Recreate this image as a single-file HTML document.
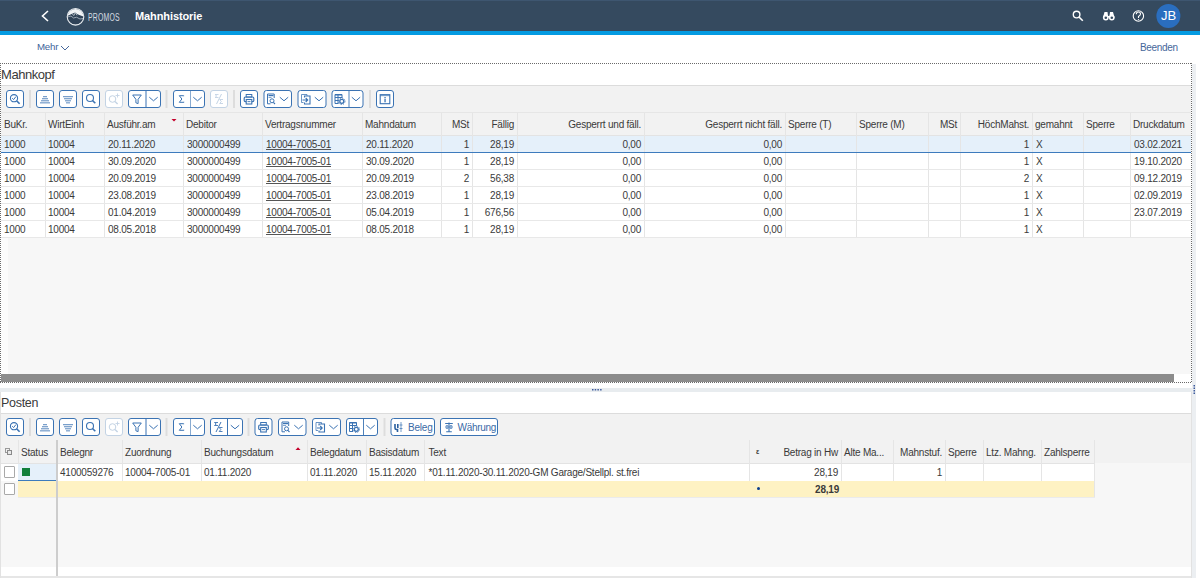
<!DOCTYPE html>
<html><head><meta charset="utf-8">
<style>
*{margin:0;padding:0;box-sizing:border-box}
html,body{width:1200px;height:578px;overflow:hidden;background:#fff;font-family:"Liberation Sans",sans-serif;color:#333}
.a{position:absolute}
.t{position:absolute;font-size:10px;letter-spacing:-0.22px;white-space:nowrap;line-height:17px;color:#3a3a3a}
.r{text-align:right}
.vl{position:absolute;width:1px;background:#e5e5e5}
.btn{position:absolute;height:18px;border:1px solid #3a72b0;border-radius:3px;background:#fff}
.btn.dis{border-color:#bfd0e2}
.sep{position:absolute;width:2px;height:18px;background:#dedede}
.dv{position:absolute;top:0;width:1px;height:16px;background:#3a72b0}
svg{position:absolute;overflow:visible}
</style></head><body>
<!-- shell -->
<div class="a" style="left:0;top:0;width:1200px;height:31px;background:#354a5f"></div>
<div class="a" style="left:0;top:0;width:1200px;height:1px;background:#3e5670"></div>
<div class="a" style="left:0;top:31px;width:1200px;height:4px;background:#049be2"></div>
<svg style="left:0;top:0" width="1200" height="30">
  <path d="M48 11 L42.5 16 L48 21" fill="none" stroke="#fff" stroke-width="1.6"/>
  <defs><clipPath id="lc"><circle cx="75.5" cy="16.8" r="7.9"/></clipPath></defs>
  <circle cx="75.5" cy="16.8" r="7.9" fill="#f2f4f6"/>
  <g clip-path="url(#lc)">
    <path d="M66 16.5 L69 15.3 L72 13.8 L75.2 12.6 L77.5 14.2 L80 15.2 L85 17 L85 26 L66 26 Z" fill="#2f4257"/>
    <path d="M67.5 17 L71 16 L73.5 18 L76.5 17.2 L80 19 L83 18.5" fill="none" stroke="#c9d2db" stroke-width="0.7"/>
    <path d="M72 13.8 L74 15.5 L75.2 12.6 L77 15.3" fill="none" stroke="#dfe5ea" stroke-width="0.7"/>
  </g>
  <circle cx="75.5" cy="16.8" r="8.3" fill="none" stroke="#e8ecef" stroke-width="1.1"/>
  <g stroke="#fff" fill="none">
    <circle cx="1076.6" cy="14.6" r="3.3" stroke-width="1.4"/>
    <path d="M1079 17 L1082.8 20.8" stroke-width="1.6"/>
    <circle cx="1138.4" cy="16" r="5.2" stroke-width="1.1"/>
  </g>
  <path d="M1136.3 14.3 Q1136.3 12 1138.4 12 Q1140.5 12 1140.5 14 Q1140.5 15.3 1138.5 16.5 L1138.5 18" fill="none" stroke="#fff" stroke-width="1.1"/>
  <circle cx="1138.5" cy="19.6" r="0.7" fill="#fff"/>
  <g fill="#fff">
    <path d="M1104.5 12 L1107.5 12 L1108 16 L1109.5 16 L1110 12 L1113 12 L1114.5 17.5 L1103 17.5 Z"/>
    <circle cx="1105.8" cy="17.6" r="2.9"/>
    <circle cx="1111.8" cy="17.6" r="2.9"/>
  </g>
  <circle cx="1105.8" cy="17.8" r="1.3" fill="#354a5f"/>
  <circle cx="1111.8" cy="17.8" r="1.3" fill="#354a5f"/>
  <circle cx="1168.4" cy="16" r="12" fill="#2a6ebf"/>
</svg>
<div class="t" style="left:88px;top:9px;font-size:10px;line-height:17px;color:#d5dbe2;letter-spacing:0.3px;transform:scaleX(0.69);transform-origin:0 0">PROMOS</div>
<div class="t" style="left:135px;top:7.5px;font-size:11px;line-height:17px;color:#fff;font-weight:bold;letter-spacing:-0.1px">Mahnhistorie</div>
<div class="t" style="left:1157px;top:7px;font-size:13px;line-height:18px;color:#fff;letter-spacing:0;width:23px;text-align:center">JB</div>

<!-- toolbar -->
<div class="t" style="left:37px;top:38px;font-size:9.7px;color:#41649a;letter-spacing:-0.2px">Mehr</div>
<div class="t" style="left:1140px;top:39px;font-size:10px;color:#46679a;letter-spacing:-0.35px">Beenden</div>

<!-- group 1 -->

<div class="t" style="left:1px;top:64px;font-size:13px;line-height:21px;letter-spacing:-0.45px">Mahnkopf</div>
<div class="a" style="left:1px;top:85px;width:1190px;height:27px;background:#f2f2f2;border-top:1px solid #dcdcdc"></div>
<div class="a" style="left:1px;top:112px;width:1190px;height:23px;background:#f2f2f2;border-top:1px solid #e6e6e6"></div>
<div class="a" style="left:1px;top:135px;width:1190px;height:103px;background:#fff"></div>
<div class="a" style="left:1px;top:135px;width:1190px;height:1px;background:#e3e3e3"></div><div class="a" style="left:1px;top:136px;width:1190px;height:17px;background:#e5f0fa;border-bottom:1px solid #3d7bbd"></div>
<div class="a" style="left:1px;top:238px;width:1190px;height:136px;background:#f7f7f7"></div><div class="a" style="left:1px;top:238px;width:7px;height:136px;background:#fcfcfc"></div>
<div class="a" style="left:1px;top:374px;width:1173px;height:8px;background:#8c8c8c"></div>

<!-- right strip -->
<div class="a" style="left:1192px;top:64px;width:4px;height:514px;background:#eceff2"></div>

<!-- splitter -->
<div class="a" style="left:0;top:388px;width:1192px;height:4px;background:#e8ecef"></div>

<!-- group 2 -->
<div class="t" style="left:1px;top:392.5px;font-size:12.5px;line-height:21px;letter-spacing:-0.3px">Posten</div>
<div class="a" style="left:0;top:413px;width:1191px;height:27px;background:#f2f2f2;border-top:1px solid #dcdcdc"></div>
<div class="a" style="left:0;top:440px;width:1191px;height:23px;background:#f2f2f2"></div>
<div class="a" style="left:0;top:463px;width:1191px;height:104px;background:#f7f7f7"></div>
<div class="a" style="left:0;top:463px;width:1094px;height:1px;background:#e3e3e3"></div><div class="a" style="left:0;top:464px;width:1094px;height:17px;background:#fff"></div>
<div class="a" style="left:18px;top:481px;width:1076px;height:17px;background:#fef2c3"></div>
<div class="a" style="left:0;top:567px;width:1191px;height:9px;background:#fff"></div>
<div class="a" style="left:0;top:576px;width:1191px;height:2px;background:#e6e6e6"></div><div class="a" style="left:0;top:392px;width:1px;height:186px;background:#e2e2e2"></div><div class="a" style="left:1191px;top:392px;width:1px;height:186px;background:#e2e2e2"></div>


<div class="a" style="left:0;top:63px;width:1192px;height:1px;background:repeating-linear-gradient(90deg,#6a6a6a 0 1px,transparent 1px 2px)"></div><div class="a" style="left:0;top:382px;width:1192px;height:1px;background:repeating-linear-gradient(90deg,#6a6a6a 0 1px,transparent 1px 2px)"></div><div class="a" style="left:0;top:63px;width:1px;height:320px;background:repeating-linear-gradient(180deg,#6a6a6a 0 1px,transparent 1px 2px)"></div><div class="a" style="left:1191px;top:63px;width:1px;height:320px;background:repeating-linear-gradient(180deg,#6a6a6a 0 1px,transparent 1px 2px)"></div>

<svg style="left:0;top:0" width="1200" height="578"><rect x="6.5" y="90.5" width="17" height="17" rx="2.5" ry="2.5" fill="#fff" stroke="#3b73b3" stroke-width="1"/><circle cx="14" cy="98.2" r="3.6" fill="none" stroke="#3b73b3" stroke-width="1.1"/><path d="M16.6 100.8 L19.6 103.8" stroke="#3b73b3" stroke-width="1.6"/><path d="M12.2 98.2 L13.6 99.6 L15.9 96.6" fill="none" stroke="#3b73b3" stroke-width="1"/><rect x="29" y="90" width="2" height="18" fill="#dddddd"/><rect x="36.5" y="90.5" width="17" height="17" rx="2.5" ry="2.5" fill="#fff" stroke="#3b73b3" stroke-width="1"/><rect x="43.0" y="96.2" width="4" height="1" fill="#3b73b3" opacity="0.85"/><rect x="42.0" y="98.25" width="6" height="1" fill="#3b73b3" opacity="0.85"/><rect x="41.0" y="100.3" width="8" height="1" fill="#3b73b3" opacity="0.85"/><rect x="40.0" y="102.35000000000001" width="10" height="1" fill="#3b73b3" opacity="0.85"/><rect x="59.5" y="90.5" width="17" height="17" rx="2.5" ry="2.5" fill="#fff" stroke="#3b73b3" stroke-width="1"/><rect x="63.0" y="96.2" width="10" height="1" fill="#3b73b3" opacity="0.85"/><rect x="64.0" y="98.25" width="8" height="1" fill="#3b73b3" opacity="0.85"/><rect x="65.0" y="100.3" width="6" height="1" fill="#3b73b3" opacity="0.85"/><rect x="66.0" y="102.35000000000001" width="4" height="1" fill="#3b73b3" opacity="0.85"/><rect x="82.5" y="90.5" width="17" height="17" rx="2.5" ry="2.5" fill="#fff" stroke="#3b73b3" stroke-width="1"/><circle cx="90" cy="98" r="3.5" fill="none" stroke="#3b73b3" stroke-width="1.1"/><path d="M92.5 100.5 L95.3 103.3" stroke="#3b73b3" stroke-width="1.6"/><rect x="105.5" y="90.5" width="17" height="17" rx="2.5" ry="2.5" fill="#fff" stroke="#c3d3e4" stroke-width="1"/><circle cx="112.5" cy="99" r="3.3" fill="none" stroke="#c3d3e4" stroke-width="1"/><path d="M115 101.4 L117.6 104" stroke="#c3d3e4" stroke-width="1.4"/><path d="M117.5 93.5 L117.5 97.5 M115.5 95.5 L119.5 95.5" stroke="#c3d3e4" stroke-width="0.9"/><rect x="128.5" y="90.5" width="32" height="17" rx="2.5" ry="2.5" fill="#fff" stroke="#3b73b3" stroke-width="1"/><path d="M132.7 95 L141.3 95 L138.1 99.3 L138.1 103.6 L135.9 102.8 L135.9 99.3 Z" fill="none" stroke="#3b73b3" stroke-width="1" stroke-linejoin="round"/><rect x="145.5" y="91" width="1" height="16" fill="#3b73b3"/><path d="M149.3 97.2 L153.5 100.8 L157.7 97.2" fill="none" stroke="#3b73b3" stroke-width="1"/><rect x="165.5" y="90" width="2" height="18" fill="#dddddd"/><rect x="173.5" y="90.5" width="31" height="17" rx="2.5" ry="2.5" fill="#fff" stroke="#3b73b3" stroke-width="1"/><path d="M183.7 96.2 L183.7 95.7 L179.3 95.7 L181.9 99 L179.3 102.3 L183.9 102.3 L183.9 101.8" fill="none" stroke="#3b73b3" stroke-width="1"/><rect x="190" y="91" width="1" height="16" fill="#3b73b3" opacity="0.6"/><path d="M193.3 97.2 L197.5 100.8 L201.7 97.2" fill="none" stroke="#3b73b3" stroke-width="1"/><rect x="210.5" y="90.5" width="17" height="17" rx="2.5" ry="2.5" fill="#fff" stroke="#c3d3e4" stroke-width="1"/><path d="M218.5 94.5 L215 94.5 L216.7 96 L215 97.5 L218.5 97.5" fill="none" stroke="#c3d3e4" stroke-width="0.9"/><path d="M223 99.5 L219.7 99.5 L221.3 101.5 L219.7 103.5 L223 103.5" fill="none" stroke="#c3d3e4" stroke-width="0.9"/><path d="M221.5 94 L216.5 104" stroke="#c3d3e4" stroke-width="1"/><rect x="233" y="90" width="2" height="18" fill="#dddddd"/><rect x="240.5" y="90.5" width="17" height="17" rx="2.5" ry="2.5" fill="#fff" stroke="#3b73b3" stroke-width="1"/><rect x="246.2" y="94.5" width="5.6" height="2.6" fill="none" stroke="#3b73b3" stroke-width="1"/><rect x="244.2" y="97" width="9.6" height="4.6" rx="1.2" fill="none" stroke="#3b73b3" stroke-width="1.2"/><rect x="246.2" y="99.5" width="5.6" height="4.5" fill="#fff" stroke="#3b73b3" stroke-width="1.1"/><rect x="247.5" y="101.2" width="3" height="0.9" fill="#3b73b3"/><rect x="264.0" y="90.5" width="27.5" height="17" rx="2.5" ry="2.5" fill="#fff" stroke="#3b73b3" stroke-width="1"/><path d="M274.2 98 L274.2 94 L267.5 94 L267.5 103.8 L270.5 103.8" fill="none" stroke="#3b73b3" stroke-width="1"/><rect x="268.5" y="95" width="5" height="1.2" fill="#3b73b3"/><rect x="268.5" y="97" width="3" height="0.9" fill="#3b73b3" opacity="0.7"/><circle cx="272" cy="100.8" r="2" fill="none" stroke="#3b73b3" stroke-width="1"/><path d="M273.4 102.3 L275 104" stroke="#3b73b3" stroke-width="1.1"/><path d="M279.8 97.2 L284 100.8 L288.2 97.2" fill="none" stroke="#3b73b3" stroke-width="1"/><rect x="298.0" y="90.5" width="28.0" height="17" rx="2.5" ry="2.5" fill="#fff" stroke="#3b73b3" stroke-width="1"/><path d="M303.5 102.5 L301.5 102.5 L301.5 94.5 L307 94.5 L307 96" fill="none" stroke="#3b73b3" stroke-width="1" opacity="0.75"/><path d="M304.5 97.5 L304.5 96 L310 96 L310 104 L304.5 104 L304.5 102.5" fill="none" stroke="#3b73b3" stroke-width="1.1"/><path d="M302.5 100 L307.5 100 M305.7 98 L307.7 100 L305.7 102" fill="none" stroke="#3b73b3" stroke-width="1.1"/><path d="M314.8 97.2 L319 100.8 L323.2 97.2" fill="none" stroke="#3b73b3" stroke-width="1"/><rect x="332.0" y="90.5" width="31.0" height="17" rx="2.5" ry="2.5" fill="#fff" stroke="#3b73b3" stroke-width="1"/><path d="M335.0 94.5 L342.0 94.5 L342.0 98 M335.0 94.5 L335.0 103.5 L338.5 103.5 M335.0 97.5 L342.0 97.5 M335.0 100.5 L338.5 100.5 M338.0 94.5 L338.0 103.5" fill="none" stroke="#3b73b3" stroke-width="1"/><rect x="335.0" y="94.2" width="7" height="1.3" fill="#3b73b3"/><circle cx="341.8" cy="101.3" r="2" fill="#fff" stroke="#3b73b3" stroke-width="1.3"/><circle cx="341.8" cy="101.3" r="3.2" fill="none" stroke="#3b73b3" stroke-width="1" stroke-dasharray="1.2 1.3"/><rect x="348.5" y="91" width="1" height="16" fill="#3b73b3" opacity="0.9"/><path d="M351.8 97.2 L356 100.8 L360.2 97.2" fill="none" stroke="#3b73b3" stroke-width="1"/><rect x="369" y="90" width="2" height="18" fill="#dddddd"/><rect x="376.5" y="90.5" width="17" height="17" rx="2.5" ry="2.5" fill="#fff" stroke="#3b73b3" stroke-width="1"/><rect x="380.2" y="94.7" width="9.6" height="9" fill="none" stroke="#3b73b3" stroke-width="1.1"/><rect x="380.2" y="94.7" width="9.6" height="1.5" fill="#3b73b3" opacity="0.6"/><rect x="384.4" y="97" width="1.3" height="1.1" fill="#3b73b3"/><rect x="384.4" y="98.7" width="1.3" height="3.6" fill="#3b73b3"/></svg>
<svg style="left:0;top:0" width="1200" height="578"><rect x="6.5" y="418.5" width="17" height="17" rx="2.5" ry="2.5" fill="#fff" stroke="#3b73b3" stroke-width="1"/><circle cx="14" cy="426.2" r="3.6" fill="none" stroke="#3b73b3" stroke-width="1.1"/><path d="M16.6 428.8 L19.6 431.8" stroke="#3b73b3" stroke-width="1.6"/><path d="M12.2 426.2 L13.6 427.6 L15.9 424.6" fill="none" stroke="#3b73b3" stroke-width="1"/><rect x="29" y="418" width="2" height="18" fill="#dddddd"/><rect x="36.5" y="418.5" width="17" height="17" rx="2.5" ry="2.5" fill="#fff" stroke="#3b73b3" stroke-width="1"/><rect x="43.0" y="424.2" width="4" height="1" fill="#3b73b3" opacity="0.85"/><rect x="42.0" y="426.25" width="6" height="1" fill="#3b73b3" opacity="0.85"/><rect x="41.0" y="428.3" width="8" height="1" fill="#3b73b3" opacity="0.85"/><rect x="40.0" y="430.34999999999997" width="10" height="1" fill="#3b73b3" opacity="0.85"/><rect x="59.5" y="418.5" width="17" height="17" rx="2.5" ry="2.5" fill="#fff" stroke="#3b73b3" stroke-width="1"/><rect x="63.0" y="424.2" width="10" height="1" fill="#3b73b3" opacity="0.85"/><rect x="64.0" y="426.25" width="8" height="1" fill="#3b73b3" opacity="0.85"/><rect x="65.0" y="428.3" width="6" height="1" fill="#3b73b3" opacity="0.85"/><rect x="66.0" y="430.34999999999997" width="4" height="1" fill="#3b73b3" opacity="0.85"/><rect x="82.5" y="418.5" width="17" height="17" rx="2.5" ry="2.5" fill="#fff" stroke="#3b73b3" stroke-width="1"/><circle cx="90" cy="426" r="3.5" fill="none" stroke="#3b73b3" stroke-width="1.1"/><path d="M92.5 428.5 L95.3 431.3" stroke="#3b73b3" stroke-width="1.6"/><rect x="105.5" y="418.5" width="17" height="17" rx="2.5" ry="2.5" fill="#fff" stroke="#c3d3e4" stroke-width="1"/><circle cx="112.5" cy="427" r="3.3" fill="none" stroke="#c3d3e4" stroke-width="1"/><path d="M115 429.4 L117.6 432" stroke="#c3d3e4" stroke-width="1.4"/><path d="M117.5 421.5 L117.5 425.5 M115.5 423.5 L119.5 423.5" stroke="#c3d3e4" stroke-width="0.9"/><rect x="128.5" y="418.5" width="32" height="17" rx="2.5" ry="2.5" fill="#fff" stroke="#3b73b3" stroke-width="1"/><path d="M132.7 423 L141.3 423 L138.1 427.3 L138.1 431.6 L135.9 430.8 L135.9 427.3 Z" fill="none" stroke="#3b73b3" stroke-width="1" stroke-linejoin="round"/><rect x="145.5" y="419" width="1" height="16" fill="#3b73b3"/><path d="M149.3 425.2 L153.5 428.8 L157.7 425.2" fill="none" stroke="#3b73b3" stroke-width="1"/><rect x="165.5" y="418" width="2" height="18" fill="#dddddd"/><rect x="173.5" y="418.5" width="31" height="17" rx="2.5" ry="2.5" fill="#fff" stroke="#3b73b3" stroke-width="1"/><path d="M183.7 424.2 L183.7 423.7 L179.3 423.7 L181.9 427 L179.3 430.3 L183.9 430.3 L183.9 429.8" fill="none" stroke="#3b73b3" stroke-width="1"/><rect x="190" y="419" width="1" height="16" fill="#3b73b3" opacity="0.6"/><path d="M193.3 425.2 L197.5 428.8 L201.7 425.2" fill="none" stroke="#3b73b3" stroke-width="1"/><rect x="210.5" y="418.5" width="32" height="17" rx="2.5" ry="2.5" fill="#fff" stroke="#3b73b3" stroke-width="1"/><path d="M218.0 422.5 L214.5 422.5 L216.2 424 L214.5 425.5 L218.0 425.5" fill="none" stroke="#3b73b3" stroke-width="0.9"/><path d="M222.5 427.5 L219.2 427.5 L220.8 429.5 L219.2 431.5 L222.5 431.5" fill="none" stroke="#3b73b3" stroke-width="0.9"/><path d="M221.0 422 L216.0 432" stroke="#3b73b3" stroke-width="1"/><rect x="227" y="419" width="1" height="16" fill="#3b73b3"/><path d="M230.8 425.2 L235 428.8 L239.2 425.2" fill="none" stroke="#3b73b3" stroke-width="1"/><rect x="247.5" y="418" width="2" height="18" fill="#dddddd"/><rect x="255.0" y="418.5" width="17.0" height="17" rx="2.5" ry="2.5" fill="#fff" stroke="#3b73b3" stroke-width="1"/><rect x="260.7" y="422.5" width="5.6" height="2.6" fill="none" stroke="#3b73b3" stroke-width="1"/><rect x="258.7" y="425" width="9.6" height="4.6" rx="1.2" fill="none" stroke="#3b73b3" stroke-width="1.2"/><rect x="260.7" y="427.5" width="5.6" height="4.5" fill="#fff" stroke="#3b73b3" stroke-width="1.1"/><rect x="262.0" y="429.2" width="3" height="0.9" fill="#3b73b3"/><rect x="278.5" y="418.5" width="27.5" height="17" rx="2.5" ry="2.5" fill="#fff" stroke="#3b73b3" stroke-width="1"/><path d="M288.7 426 L288.7 422 L282.0 422 L282.0 431.8 L285.0 431.8" fill="none" stroke="#3b73b3" stroke-width="1"/><rect x="283.0" y="423" width="5" height="1.2" fill="#3b73b3"/><rect x="283.0" y="425" width="3" height="0.9" fill="#3b73b3" opacity="0.7"/><circle cx="286.5" cy="428.8" r="2" fill="none" stroke="#3b73b3" stroke-width="1"/><path d="M287.9 430.3 L289.5 432" stroke="#3b73b3" stroke-width="1.1"/><path d="M294.3 425.2 L298.5 428.8 L302.7 425.2" fill="none" stroke="#3b73b3" stroke-width="1"/><rect x="312.5" y="418.5" width="28.0" height="17" rx="2.5" ry="2.5" fill="#fff" stroke="#3b73b3" stroke-width="1"/><path d="M318.0 430.5 L316.0 430.5 L316.0 422.5 L321.5 422.5 L321.5 424" fill="none" stroke="#3b73b3" stroke-width="1" opacity="0.75"/><path d="M319.0 425.5 L319.0 424 L324.5 424 L324.5 432 L319.0 432 L319.0 430.5" fill="none" stroke="#3b73b3" stroke-width="1.1"/><path d="M317.0 428 L322.0 428 M320.2 426 L322.2 428 L320.2 430" fill="none" stroke="#3b73b3" stroke-width="1.1"/><path d="M329.3 425.2 L333.5 428.8 L337.7 425.2" fill="none" stroke="#3b73b3" stroke-width="1"/><rect x="346.5" y="418.5" width="31.0" height="17" rx="2.5" ry="2.5" fill="#fff" stroke="#3b73b3" stroke-width="1"/><path d="M349.5 422.5 L356.5 422.5 L356.5 426 M349.5 422.5 L349.5 431.5 L353.0 431.5 M349.5 425.5 L356.5 425.5 M349.5 428.5 L353.0 428.5 M352.5 422.5 L352.5 431.5" fill="none" stroke="#3b73b3" stroke-width="1"/><rect x="349.5" y="422.2" width="7" height="1.3" fill="#3b73b3"/><circle cx="356.3" cy="429.3" r="2" fill="#fff" stroke="#3b73b3" stroke-width="1.3"/><circle cx="356.3" cy="429.3" r="3.2" fill="none" stroke="#3b73b3" stroke-width="1" stroke-dasharray="1.2 1.3"/><rect x="363.0" y="419" width="1" height="16" fill="#3b73b3" opacity="0.9"/><path d="M366.3 425.2 L370.5 428.8 L374.7 425.2" fill="none" stroke="#3b73b3" stroke-width="1"/><rect x="383.5" y="418" width="2" height="18" fill="#dddddd"/><rect x="391.0" y="418.5" width="43.5" height="17" rx="2.5" ry="2.5" fill="#fff" stroke="#3b73b3" stroke-width="1"/><path d="M395 424 L395 428 Q395 429.5 396.5 429.5 L397.5 429.5 L397.5 432 M397.8 424 L397.8 428" fill="none" stroke="#2a5f9e" stroke-width="1.6"/><path d="M401 422 L401 432 M399.5 425 L402.5 425 M399.5 428.5 L402.5 428.5" fill="none" stroke="#3b73b3" stroke-width="1" opacity="0.7"/><rect x="440.5" y="418.5" width="57" height="17" rx="2.5" ry="2.5" fill="#fff" stroke="#3b73b3" stroke-width="1"/><path d="M449 422.5 L449 431.5 M446.2 431.8 L451.8 431.8 M445.2 423.5 L452.8 423.5" fill="none" stroke="#3b73b3" stroke-width="1.1"/><path d="M446 425.8 L448 425.8 L448 428.2 L446 428.2 Z M450 425.8 L452 425.8 L452 428.2 L450 428.2 Z" fill="none" stroke="#3b73b3" stroke-width="0.9"/></svg>
<div class="t" style="left:408px;top:419px;font-size:10px;line-height:18px;color:#3a6aa6;letter-spacing:-0.2px">Beleg</div>
<div class="t" style="left:457.5px;top:419px;font-size:10px;line-height:18px;color:#3a6aa6;letter-spacing:-0.3px">Währung</div>
<div class="vl" style="left:45px;top:113px;height:125px"></div>
<div class="vl" style="left:104px;top:113px;height:125px"></div>
<div class="vl" style="left:183px;top:113px;height:125px"></div>
<div class="vl" style="left:262px;top:113px;height:125px"></div>
<div class="vl" style="left:362px;top:113px;height:125px"></div>
<div class="vl" style="left:441px;top:113px;height:125px"></div>
<div class="vl" style="left:472px;top:113px;height:125px"></div>
<div class="vl" style="left:517px;top:113px;height:125px"></div>
<div class="vl" style="left:644px;top:113px;height:125px"></div>
<div class="vl" style="left:785px;top:113px;height:125px"></div>
<div class="vl" style="left:856px;top:113px;height:125px"></div>
<div class="vl" style="left:928px;top:113px;height:125px"></div>
<div class="vl" style="left:960px;top:113px;height:125px"></div>
<div class="vl" style="left:1032px;top:113px;height:125px"></div>
<div class="vl" style="left:1083px;top:113px;height:125px"></div>
<div class="vl" style="left:1130px;top:113px;height:125px"></div>
<div class="a" style="left:1px;top:169px;width:1190px;height:1px;background:#e8e8e8"></div>
<div class="a" style="left:1px;top:186px;width:1190px;height:1px;background:#e8e8e8"></div>
<div class="a" style="left:1px;top:203px;width:1190px;height:1px;background:#e8e8e8"></div>
<div class="a" style="left:1px;top:220px;width:1190px;height:1px;background:#e8e8e8"></div>
<div class="a" style="left:1px;top:237px;width:1190px;height:1px;background:#e8e8e8"></div>
<div class="a" style="left:1px;top:152px;width:1190px;height:1px;background:#3d7bbd"></div>
<div class="t" style="left:4px;top:114px;line-height:22px">BuKr.</div>
<div class="t" style="left:48px;top:114px;line-height:22px">WirtEinh</div>
<div class="t" style="left:107px;top:114px;line-height:22px">Ausführ.am</div>
<div class="t" style="left:186px;top:114px;line-height:22px">Debitor</div>
<div class="t" style="left:265px;top:114px;line-height:22px">Vertragsnummer</div>
<div class="t" style="left:365px;top:114px;line-height:22px">Mahndatum</div>
<div class="t r" style="left:441px;width:28px;top:114px;line-height:22px">MSt</div>
<div class="t r" style="left:472px;width:42px;top:114px;line-height:22px">Fällig</div>
<div class="t r" style="left:517px;width:124px;top:114px;line-height:22px">Gesperrt und fäll.</div>
<div class="t r" style="left:644px;width:138px;top:114px;line-height:22px">Gesperrt nicht fäll.</div>
<div class="t" style="left:788px;top:114px;line-height:22px">Sperre (T)</div>
<div class="t" style="left:859px;top:114px;line-height:22px">Sperre (M)</div>
<div class="t r" style="left:928px;width:29px;top:114px;line-height:22px">MSt</div>
<div class="t r" style="left:960px;width:69px;top:114px;line-height:22px">HöchMahst.</div>
<div class="t" style="left:1035px;top:114px;line-height:22px">gemahnt</div>
<div class="t" style="left:1086px;top:114px;line-height:22px">Sperre</div>
<div class="t" style="left:1133px;top:114px;line-height:22px">Druckdatum</div>
<div class="t" style="left:4px;top:137px;line-height:16px">1000</div>
<div class="t" style="left:48px;top:137px;line-height:16px">10004</div>
<div class="t" style="left:108px;top:137px;line-height:16px">20.11.2020</div>
<div class="t" style="left:187px;top:137px;line-height:16px">3000000499</div>
<div class="t" style="left:266px;top:137px;line-height:16px;text-decoration:underline;text-underline-offset:0.6px;text-decoration-thickness:1px;text-decoration-color:#555">10004-7005-01</div>
<div class="t" style="left:366px;top:137px;line-height:16px">20.11.2020</div>
<div class="t r" style="left:442px;width:27px;top:137px;line-height:16px">1</div>
<div class="t r" style="left:473px;width:41px;top:137px;line-height:16px">28,19</div>
<div class="t r" style="left:518px;width:123px;top:137px;line-height:16px">0,00</div>
<div class="t r" style="left:645px;width:137px;top:137px;line-height:16px">0,00</div>



<div class="t r" style="left:961px;width:68px;top:137px;line-height:16px">1</div>
<div class="t" style="left:1036px;top:137px;line-height:16px">X</div>

<div class="t" style="left:1134px;top:137px;line-height:16px">03.02.2021</div>
<div class="t" style="left:4px;top:154px;line-height:16px">1000</div>
<div class="t" style="left:48px;top:154px;line-height:16px">10004</div>
<div class="t" style="left:108px;top:154px;line-height:16px">30.09.2020</div>
<div class="t" style="left:187px;top:154px;line-height:16px">3000000499</div>
<div class="t" style="left:266px;top:154px;line-height:16px;text-decoration:underline;text-underline-offset:0.6px;text-decoration-thickness:1px;text-decoration-color:#555">10004-7005-01</div>
<div class="t" style="left:366px;top:154px;line-height:16px">30.09.2020</div>
<div class="t r" style="left:442px;width:27px;top:154px;line-height:16px">1</div>
<div class="t r" style="left:473px;width:41px;top:154px;line-height:16px">28,19</div>
<div class="t r" style="left:518px;width:123px;top:154px;line-height:16px">0,00</div>
<div class="t r" style="left:645px;width:137px;top:154px;line-height:16px">0,00</div>



<div class="t r" style="left:961px;width:68px;top:154px;line-height:16px">1</div>
<div class="t" style="left:1036px;top:154px;line-height:16px">X</div>

<div class="t" style="left:1134px;top:154px;line-height:16px">19.10.2020</div>
<div class="t" style="left:4px;top:171px;line-height:16px">1000</div>
<div class="t" style="left:48px;top:171px;line-height:16px">10004</div>
<div class="t" style="left:108px;top:171px;line-height:16px">20.09.2019</div>
<div class="t" style="left:187px;top:171px;line-height:16px">3000000499</div>
<div class="t" style="left:266px;top:171px;line-height:16px;text-decoration:underline;text-underline-offset:0.6px;text-decoration-thickness:1px;text-decoration-color:#555">10004-7005-01</div>
<div class="t" style="left:366px;top:171px;line-height:16px">20.09.2019</div>
<div class="t r" style="left:442px;width:27px;top:171px;line-height:16px">2</div>
<div class="t r" style="left:473px;width:41px;top:171px;line-height:16px">56,38</div>
<div class="t r" style="left:518px;width:123px;top:171px;line-height:16px">0,00</div>
<div class="t r" style="left:645px;width:137px;top:171px;line-height:16px">0,00</div>



<div class="t r" style="left:961px;width:68px;top:171px;line-height:16px">2</div>
<div class="t" style="left:1036px;top:171px;line-height:16px">X</div>

<div class="t" style="left:1134px;top:171px;line-height:16px">09.12.2019</div>
<div class="t" style="left:4px;top:188px;line-height:16px">1000</div>
<div class="t" style="left:48px;top:188px;line-height:16px">10004</div>
<div class="t" style="left:108px;top:188px;line-height:16px">23.08.2019</div>
<div class="t" style="left:187px;top:188px;line-height:16px">3000000499</div>
<div class="t" style="left:266px;top:188px;line-height:16px;text-decoration:underline;text-underline-offset:0.6px;text-decoration-thickness:1px;text-decoration-color:#555">10004-7005-01</div>
<div class="t" style="left:366px;top:188px;line-height:16px">23.08.2019</div>
<div class="t r" style="left:442px;width:27px;top:188px;line-height:16px">1</div>
<div class="t r" style="left:473px;width:41px;top:188px;line-height:16px">28,19</div>
<div class="t r" style="left:518px;width:123px;top:188px;line-height:16px">0,00</div>
<div class="t r" style="left:645px;width:137px;top:188px;line-height:16px">0,00</div>



<div class="t r" style="left:961px;width:68px;top:188px;line-height:16px">1</div>
<div class="t" style="left:1036px;top:188px;line-height:16px">X</div>

<div class="t" style="left:1134px;top:188px;line-height:16px">02.09.2019</div>
<div class="t" style="left:4px;top:205px;line-height:16px">1000</div>
<div class="t" style="left:48px;top:205px;line-height:16px">10004</div>
<div class="t" style="left:108px;top:205px;line-height:16px">01.04.2019</div>
<div class="t" style="left:187px;top:205px;line-height:16px">3000000499</div>
<div class="t" style="left:266px;top:205px;line-height:16px;text-decoration:underline;text-underline-offset:0.6px;text-decoration-thickness:1px;text-decoration-color:#555">10004-7005-01</div>
<div class="t" style="left:366px;top:205px;line-height:16px">05.04.2019</div>
<div class="t r" style="left:442px;width:27px;top:205px;line-height:16px">1</div>
<div class="t r" style="left:473px;width:41px;top:205px;line-height:16px">676,56</div>
<div class="t r" style="left:518px;width:123px;top:205px;line-height:16px">0,00</div>
<div class="t r" style="left:645px;width:137px;top:205px;line-height:16px">0,00</div>



<div class="t r" style="left:961px;width:68px;top:205px;line-height:16px">1</div>
<div class="t" style="left:1036px;top:205px;line-height:16px">X</div>

<div class="t" style="left:1134px;top:205px;line-height:16px">23.07.2019</div>
<div class="t" style="left:4px;top:222px;line-height:16px">1000</div>
<div class="t" style="left:48px;top:222px;line-height:16px">10004</div>
<div class="t" style="left:108px;top:222px;line-height:16px">08.05.2018</div>
<div class="t" style="left:187px;top:222px;line-height:16px">3000000499</div>
<div class="t" style="left:266px;top:222px;line-height:16px;text-decoration:underline;text-underline-offset:0.6px;text-decoration-thickness:1px;text-decoration-color:#555">10004-7005-01</div>
<div class="t" style="left:366px;top:222px;line-height:16px">08.05.2018</div>
<div class="t r" style="left:442px;width:27px;top:222px;line-height:16px">1</div>
<div class="t r" style="left:473px;width:41px;top:222px;line-height:16px">28,19</div>
<div class="t r" style="left:518px;width:123px;top:222px;line-height:16px">0,00</div>
<div class="t r" style="left:645px;width:137px;top:222px;line-height:16px">0,00</div>



<div class="t r" style="left:961px;width:68px;top:222px;line-height:16px">1</div>
<div class="t" style="left:1036px;top:222px;line-height:16px">X</div>


<div class="vl" style="left:18px;top:440px;height:41px"></div>
<div class="vl" style="left:122px;top:440px;height:41px"></div>
<div class="vl" style="left:201px;top:440px;height:41px"></div>
<div class="vl" style="left:307px;top:440px;height:41px"></div>
<div class="vl" style="left:366px;top:440px;height:41px"></div>
<div class="vl" style="left:424px;top:440px;height:41px"></div>
<div class="vl" style="left:749px;top:440px;height:41px"></div>
<div class="vl" style="left:841px;top:440px;height:41px"></div>
<div class="vl" style="left:893px;top:440px;height:41px"></div>
<div class="vl" style="left:945px;top:440px;height:41px"></div>
<div class="vl" style="left:983px;top:440px;height:41px"></div>
<div class="vl" style="left:1041px;top:440px;height:41px"></div>
<div class="vl" style="left:1094px;top:440px;height:41px"></div>
<div class="vl" style="left:1094px;top:440px;height:58px"></div><div class="a" style="left:18px;top:497px;width:1077px;height:1px;background:#ebebeb"></div>
<div class="a" style="left:56px;top:440px;width:2px;height:136px;background:#cdcdcd"></div>

<div class="t" style="left:21px;top:441px;line-height:23px">Status</div>
<div class="t" style="left:60px;top:441px;line-height:23px">Belegnr</div>
<div class="t" style="left:125px;top:441px;line-height:23px">Zuordnung</div>
<div class="t" style="left:204px;top:441px;line-height:23px">Buchungsdatum</div>
<div class="t" style="left:310px;top:441px;line-height:23px">Belegdatum</div>
<div class="t" style="left:369px;top:441px;line-height:23px">Basisdatum</div>
<div class="t" style="left:428.5px;top:441px;line-height:23px">Text</div>

<div class="t r" style="left:770px;width:68px;top:441px;line-height:23px">Betrag in Hw</div>
<div class="t" style="left:844px;top:441px;line-height:23px">Alte Ma...</div>
<div class="t r" style="left:893px;width:49px;top:441px;line-height:23px">Mahnstuf.</div>
<div class="t" style="left:948px;top:441px;line-height:23px">Sperre</div>
<div class="t" style="left:986px;top:441px;line-height:23px">Ltz. Mahng.</div>
<div class="t" style="left:1044px;top:441px;line-height:23px">Zahlsperre</div>


<div class="t" style="left:60px;top:465px;line-height:16px">4100059276</div>
<div class="t" style="left:125px;top:465px;line-height:16px">10004-7005-01</div>
<div class="t" style="left:204px;top:465px;line-height:16px">01.11.2020</div>
<div class="t" style="left:310px;top:465px;line-height:16px">01.11.2020</div>
<div class="t" style="left:369px;top:465px;line-height:16px">15.11.2020</div>
<div class="t" style="left:428.5px;top:465px;line-height:16px">*01.11.2020-30.11.2020-GM Garage/Stellpl. st.frei</div>

<div class="t r" style="left:770px;width:68px;top:465px;line-height:16px">28,19</div>

<div class="t r" style="left:893px;width:49px;top:465px;line-height:16px">1</div>



<div class="t r" style="left:749px;width:90px;top:482px;line-height:16px;font-weight:bold">28,19</div>
<div class="a" style="left:18px;top:464px;width:38px;height:17px;background:#e5f0fa;border-bottom:1px solid #3d7bbd"></div>
<div class="a" style="left:22px;top:468px;width:8px;height:8px;background:#12803b"></div>
<div class="a" style="left:4px;top:466px;width:11px;height:12px;border:1px solid #a9a9a9;border-radius:1px;background:#fff"></div>
<div class="a" style="left:4px;top:483px;width:11px;height:12px;border:1px solid #a9a9a9;border-radius:1px;background:#fff"></div>
<svg style="left:0;top:0" width="20" height="460"><rect x="5.5" y="448.5" width="4" height="4" fill="none" stroke="#9a9a9a" stroke-width="1"/><rect x="7.5" y="450.5" width="4" height="4" fill="#e8e8e8" stroke="#8a8a8a" stroke-width="1"/></svg>
<div class="t" style="left:756px;top:446px;font-size:7px;line-height:12px;font-weight:bold;letter-spacing:0">ε</div>
<div class="a" style="left:757px;top:487px;width:3px;height:3px;border-radius:1.5px;background:#0b3d8c"></div>
<svg style="left:0;top:0" width="400" height="460"><path d="M171.5 119 L176.5 119 L174 121.5 Z" fill="#c4002b"/><path d="M295.5 450 L300.5 450 L298 447.3 Z" fill="#c4002b"/></svg>
<svg style="left:0;top:0" width="80" height="60"><path d="M61 46 L65 50 L69 46" fill="none" stroke="#46679a" stroke-width="1"/></svg>
<svg style="left:0;top:0" width="1200" height="400"><rect x="592.0" y="389" width="1.5" height="1.5" fill="#3c5a9c"/><rect x="594.7" y="389" width="1.5" height="1.5" fill="#3c5a9c"/><rect x="597.4" y="389" width="1.5" height="1.5" fill="#3c5a9c"/><rect x="600.1" y="389" width="1.5" height="1.5" fill="#3c5a9c"/><rect x="1193.5" y="385.0" width="1.5" height="1.5" fill="#3c5a9c"/><rect x="1193.5" y="387.5" width="1.5" height="1.5" fill="#3c5a9c"/><rect x="1193.5" y="390.0" width="1.5" height="1.5" fill="#3c5a9c"/><rect x="1193.5" y="392.5" width="1.5" height="1.5" fill="#3c5a9c"/></svg>
</body></html>
